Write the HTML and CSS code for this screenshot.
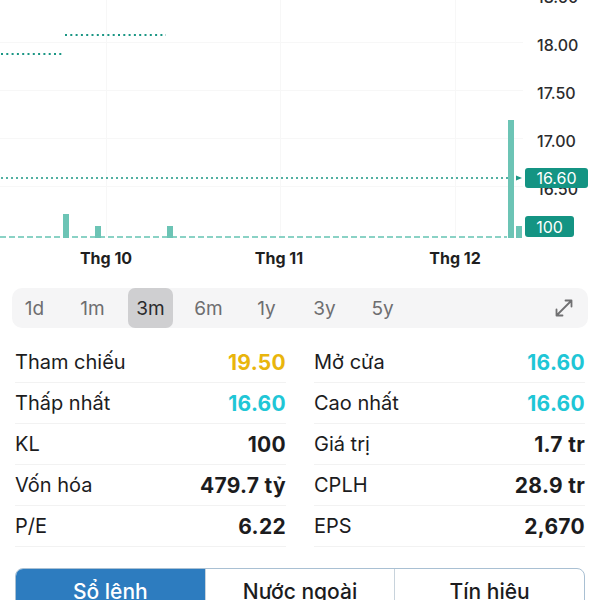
FILE: index.html
```html
<!DOCTYPE html>
<html lang="vi">
<head>
    <meta charset="UTF-8">
    <meta name="viewport" content="width=device-width, initial-scale=1.0">
    <title>Biểu đồ giá</title>
    <link rel="stylesheet" href="styles.css">
</head>
<body>
    <div class="chart">
        <svg class="chart-svg" width="600" height="280" viewBox="0 0 600 280">
            <!-- luoi -->
            <g class="grid">
                <line x1="0" y1="-5.5" x2="523" y2="-5.5"/>
                <line x1="0" y1="42.5" x2="523" y2="42.5"/>
                <line x1="0" y1="90.5" x2="523" y2="90.5"/>
                <line x1="0" y1="138.5" x2="523" y2="138.5"/>
                <line x1="0" y1="186.5" x2="523" y2="186.5"/>
                <line x1="106.5" y1="0" x2="106.5" y2="237"/>
                <line x1="280.5" y1="0" x2="280.5" y2="237"/>
                <line x1="455.5" y1="0" x2="455.5" y2="237"/>
            </g>

            <!-- truc gia -->
            <g class="axis-label">
                <text x="537" y="3">18.50</text>
                <text x="537" y="51">18.00</text>
                <text x="537" y="99">17.50</text>
                <text x="537" y="146.5">17.00</text>
                <text x="537" y="194.5">16.50</text>
            </g>

            <!-- duong gia -->
            <line class="price-dots" x1="1" y1="54" x2="62" y2="54"/>
            <line class="price-dots" x1="65" y1="35" x2="166" y2="35"/>
            <line class="last-line" x1="1" y1="178" x2="517" y2="178"/>
            <polygon class="last-arrow" points="516,175.5 522,178 516,180.5"/>

            <!-- khoi luong -->
            <line class="vol-base" x1="0" y1="237" x2="507" y2="237"/>
            <g class="vol-bar">
                <rect x="63" y="214" width="6" height="24"/>
                <rect x="95" y="226" width="6" height="12"/>
                <rect x="167" y="226" width="6" height="12"/>
                <rect x="508" y="120" width="6" height="118"/>
                <rect x="516" y="226" width="6" height="12"/>
            </g>

            <!-- nhan -->
            <rect class="tag" x="525" y="168" width="63" height="20" rx="3"/>
            <text class="tag-text" x="556.5" y="184">16.60</text>
            <rect class="tag" x="525" y="216" width="49" height="21" rx="3"/>
            <text class="tag-text" x="549.5" y="232.5">100</text>

            <g class="month-label">
                <text x="106" y="264">Thg 10</text>
                <text x="279" y="264">Thg 11</text>
                <text x="455" y="264">Thg 12</text>
            </g>
        </svg>
    </div>

    <div class="range-bar">
        <div class="ranges">
            <span class="range">1d</span>
            <span class="range">1m</span>
            <span class="range active">3m</span>
            <span class="range">6m</span>
            <span class="range">1y</span>
            <span class="range">3y</span>
            <span class="range">5y</span>
        </div>
        <svg class="expand" width="22" height="22" viewBox="0 0 22 22">
            <path d="M3.5 18.5 L18.5 3.5 M12.5 3.5 H18.5 V9.5 M3.5 12.5 V18.5 H9.5"/>
        </svg>
    </div>

    <div class="stats">
        <div class="stat"><span>Tham chiếu</span><strong class="ref">19.50</strong></div>
        <div class="stat"><span>Mở cửa</span><strong class="up">16.60</strong></div>
        <div class="stat"><span>Thấp nhất</span><strong class="up">16.60</strong></div>
        <div class="stat"><span>Cao nhất</span><strong class="up">16.60</strong></div>
        <div class="stat"><span>KL</span><strong>100</strong></div>
        <div class="stat"><span>Giá trị</span><strong>1.7 tr</strong></div>
        <div class="stat"><span>Vốn hóa</span><strong>479.7 tỷ</strong></div>
        <div class="stat"><span>CPLH</span><strong>28.9 tr</strong></div>
        <div class="stat"><span>P/E</span><strong>6.22</strong></div>
        <div class="stat"><span>EPS</span><strong>2,670</strong></div>
    </div>

    <div class="tabs">
        <div class="tab active">Sổ lệnh</div>
        <div class="tab">Nước ngoài</div>
        <div class="tab">Tín hiệu</div>
    </div>
</body>
</html>
```

FILE: styles.css
```css
body {
    font-family: 'Inter', 'Noto Sans', sans-serif;
    background-color: #fff;
    color: #1c1c1e;
    margin: 0;
    width: 600px;
    height: 600px;
    overflow: hidden;
}
.chart {
    height: 288px;
}
.chart-svg {
    display: block;
}
.grid line {
    stroke: #f7f7f7;
    stroke-width: 1;
}
.axis-label text {
    font-size: 16px;
    font-weight: 500;
    fill: #2c2c2e;
}
.price-dots {
    stroke: #1a9684;
    stroke-width: 2;
    stroke-dasharray: 2 3.3;
}
.last-line {
    stroke: #1a9684;
    stroke-width: 1.5;
    stroke-dasharray: 2 3;
}
.last-arrow {
    fill: #1a9684;
}
.vol-base {
    stroke: #8ad2c5;
    stroke-width: 2;
    stroke-dasharray: 6 3;
}
.vol-bar rect {
    fill: #6cc4b5;
}
.tag {
    fill: #149483;
}
.tag-text {
    font-size: 16px;
    fill: #fff;
    text-anchor: middle;
}
.month-label text {
    font-size: 16px;
    font-weight: 700;
    fill: #1f1f1f;
    text-anchor: middle;
}
.range-bar {
    display: flex;
    align-items: center;
    justify-content: space-between;
    height: 40px;
    margin: 0 12px;
    background-color: #f5f5f6;
    border-radius: 10px;
    padding-right: 13px;
}
.ranges {
    display: flex;
    gap: 13px;
    height: 100%;
}
.range {
    width: 45px;
    display: flex;
    align-items: center;
    justify-content: center;
    font-size: 19px;
    color: #6e6e70;
    border-radius: 7px;
}
.range.active {
    background-color: #cfcfd1;
    color: #2a2a2c;
}
.expand path {
    fill: none;
    stroke: #707072;
    stroke-width: 1.8;
    stroke-linecap: round;
    stroke-linejoin: round;
}
.stats {
    display: grid;
    grid-template-columns: 1fr 1fr;
    column-gap: 28px;
    margin: 14px 15px 0;
}
.stat {
    display: flex;
    justify-content: space-between;
    align-items: center;
    height: 40px;
    border-bottom: 1px solid #f2f2f2;
    font-size: 20px;
}
.stat strong {
    font-size: 21px;
    font-weight: 700;
    letter-spacing: 0.3px;
}
.stat .ref {
    color: #e9b50c;
}
.stat .up {
    color: #1fc6d6;
}
.tabs {
    display: flex;
    margin: 21px 15px 0;
    border: 1.5px solid #a9c0d3;
    border-radius: 8px;
    overflow: hidden;
    height: 44px;
}
.tab {
    flex: 1;
    display: flex;
    align-items: center;
    justify-content: center;
    font-size: 21px;
    font-weight: 500;
    color: #1c1c1e;
    border-left: 1.5px solid #c8d3dc;
}
.tab:first-child {
    border-left: none;
}
.tab.active {
    background-color: #2d7cbf;
    color: #fff;
}
```
